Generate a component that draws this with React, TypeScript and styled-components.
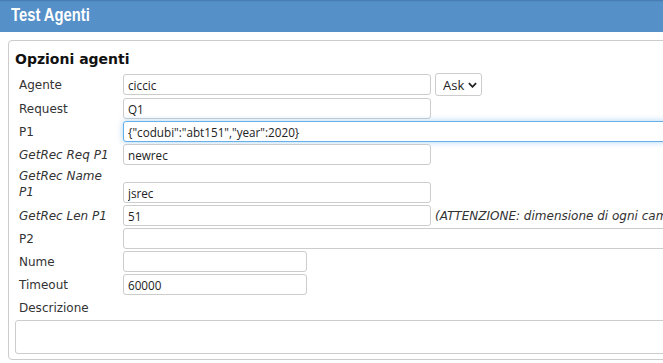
import { FC } from 'react';
import styled, { createGlobalStyle } from 'styled-components';

const palette = {
	header: '#5590c8',
	headerEdge: '#4577ad',
	border: '#cccccc',
	text: '#333333',
	focus: '#66afe9',
};

const GlobalStyle = createGlobalStyle`
	html, body {
		margin: 0;
		padding: 0;
		background: #fff;
		overflow: hidden;
	}
	body {
		font-family: 'DejaVu Sans', Verdana, sans-serif;
		font-size: 12px;
		color: ${palette.text};
	}
`;

const P1_VALUE = '{"codubi":"abt151","year":2020}';

const App: FC = (): JSX.Element => {
	// the P1 field is shown focused, with the caret after the last char
	const placeCaret = (el: HTMLInputElement | null) => {
		if (el) {
			el.focus({ preventScroll: true });
			el.setSelectionRange(P1_VALUE.length, P1_VALUE.length);
			window.scrollTo(0, 0);
		}
	};

	return (
		<Page>
			<GlobalStyle />
			<Header>
				<Title>Test Agenti</Title>
			</Header>
			<Panel>
				<PanelTitle>Opzioni agenti</PanelTitle>
				<Form>
					<Label>Agente</Label>
					<Field>
						<TextInput $width={308} defaultValue="ciccic" />
						<SelectWrap>
							<Select defaultValue="Ask">
								<option>Ask</option>
								<option>Tell</option>
							</Select>
							<Chevron viewBox="0 0 10 6" width="9" height="6">
								<path d="M1 1 L5 5 L9 1" fill="none" stroke="#222" strokeWidth="2" />
							</Chevron>
						</SelectWrap>
					</Field>

					<Label>Request</Label>
					<Field>
						<TextInput $width={308} defaultValue="Q1" />
					</Field>

					<Label>P1</Label>
					<Field>
						<TextInput $width={700} ref={placeCaret} defaultValue={P1_VALUE} />
					</Field>

					<Label $italic>GetRec Req P1</Label>
					<Field>
						<TextInput $width={308} defaultValue="newrec" />
					</Field>

					<Label $italic $tall>GetRec Name P1</Label>
					<Field $bottom>
						<TextInput $width={308} defaultValue="jsrec" />
					</Field>

					<Label $italic>GetRec Len P1</Label>
					<Field>
						<TextInput $width={308} defaultValue="51" />
						<Note>(ATTENZIONE: dimensione di ogni campo del record)</Note>
					</Field>

					<Label>P2</Label>
					<Field>
						<TextInput $width={700} defaultValue="" />
					</Field>

					<Label>Nume</Label>
					<Field>
						<TextInput $width={184} defaultValue="" />
					</Field>

					<Label>Timeout</Label>
					<Field>
						<TextInput $width={184} defaultValue="60000" />
					</Field>

					<Label>Descrizione</Label>
					<Field />

					<TextArea defaultValue="" />
				</Form>
			</Panel>
		</Page>
	);
};

const Page = styled.div`
	width: 100vw;
	height: 100vh;
	overflow: clip;
`;

const Header = styled.header`
	height: 32px;
	display: flex;
	align-items: center;
	padding-left: 11px;
	background: linear-gradient(${palette.headerEdge} 0, ${palette.header} 2px);
`;

const Title = styled.h1`
	margin: -3px 0 0 0;
	font-family: 'Liberation Sans', Arial, sans-serif;
	font-size: 17.5px;
	font-weight: bold;
	color: #fff;
	line-height: 20px;
	transform: scaleX(0.845);
	transform-origin: left center;
`;

const Panel = styled.section`
	margin: 8px 0 0 8px;
	width: 1000px;
	border: 1px solid ${palette.border};
	border-radius: 4px;
	padding: 10px 6px 5px 6px;
	box-sizing: border-box;
`;

const PanelTitle = styled.h2`
	margin: 0 0 5px 0;
	font-family: 'DejaVu Sans', Verdana, sans-serif;
	font-size: 14px;
	line-height: 17px;
	font-weight: bold;
	color: #111;
`;

const Form = styled.div`
	display: grid;
	grid-template-columns: 108px 1fr;
	row-gap: 2px;
	align-items: center;
`;

const Label = styled.div<{ $italic?: boolean; $tall?: boolean }>`
	padding: ${({ $tall }) => ($tall ? '1px 8px 3px 4px' : '0 8px 0 4px')};
	font-style: ${({ $italic }) => ($italic ? 'italic' : 'normal')};
	line-height: 16px;
	color: ${palette.text};
`;

const Field = styled.div<{ $bottom?: boolean }>`
	display: flex;
	align-items: center;
	gap: 4px;
	min-height: 21px;
	align-self: ${({ $bottom }) => ($bottom ? 'end' : 'center')};
`;

const TextInput = styled.input<{ $width: number }>`
	box-sizing: border-box;
	width: ${({ $width }) => `${$width}px`};
	flex: none;
	height: 21px;
	padding: 0 4px;
	border: 1px solid ${palette.border};
	border-radius: 3px;
	font-family: 'Open Sans', 'Noto Sans', sans-serif;
	font-size: 11.7px;
	color: #222;
	background: #fff;
	outline: none;
	&:focus {
		border-color: ${palette.focus};
		box-shadow: 0 0 6px rgba(102, 175, 233, 0.55);
	}
`;

const SelectWrap = styled.div`
	position: relative;
	display: flex;
`;

const Select = styled.select`
	appearance: none;
	box-sizing: border-box;
	width: 47px;
	height: 23px;
	padding: 0 0 0 7px;
	border: 1px solid ${palette.border};
	border-radius: 3px;
	background: #fff;
	font-family: 'Open Sans', 'Noto Sans', sans-serif;
	font-size: 13px;
	color: #222;
`;

const Chevron = styled.svg`
	position: absolute;
	right: 5px;
	top: 9px;
	pointer-events: none;
`;

const Note = styled.span`
	font-style: italic;
	white-space: nowrap;
	color: ${palette.text};
`;

const TextArea = styled.textarea`
	grid-column: 1 / -1;
	box-sizing: border-box;
	width: 980px;
	height: 34px;
	margin: 0;
	border: 1px solid ${palette.border};
	border-radius: 3px;
	resize: none;
	font-family: 'Open Sans', 'Noto Sans', sans-serif;
	font-size: 12px;
`;

export default App;
